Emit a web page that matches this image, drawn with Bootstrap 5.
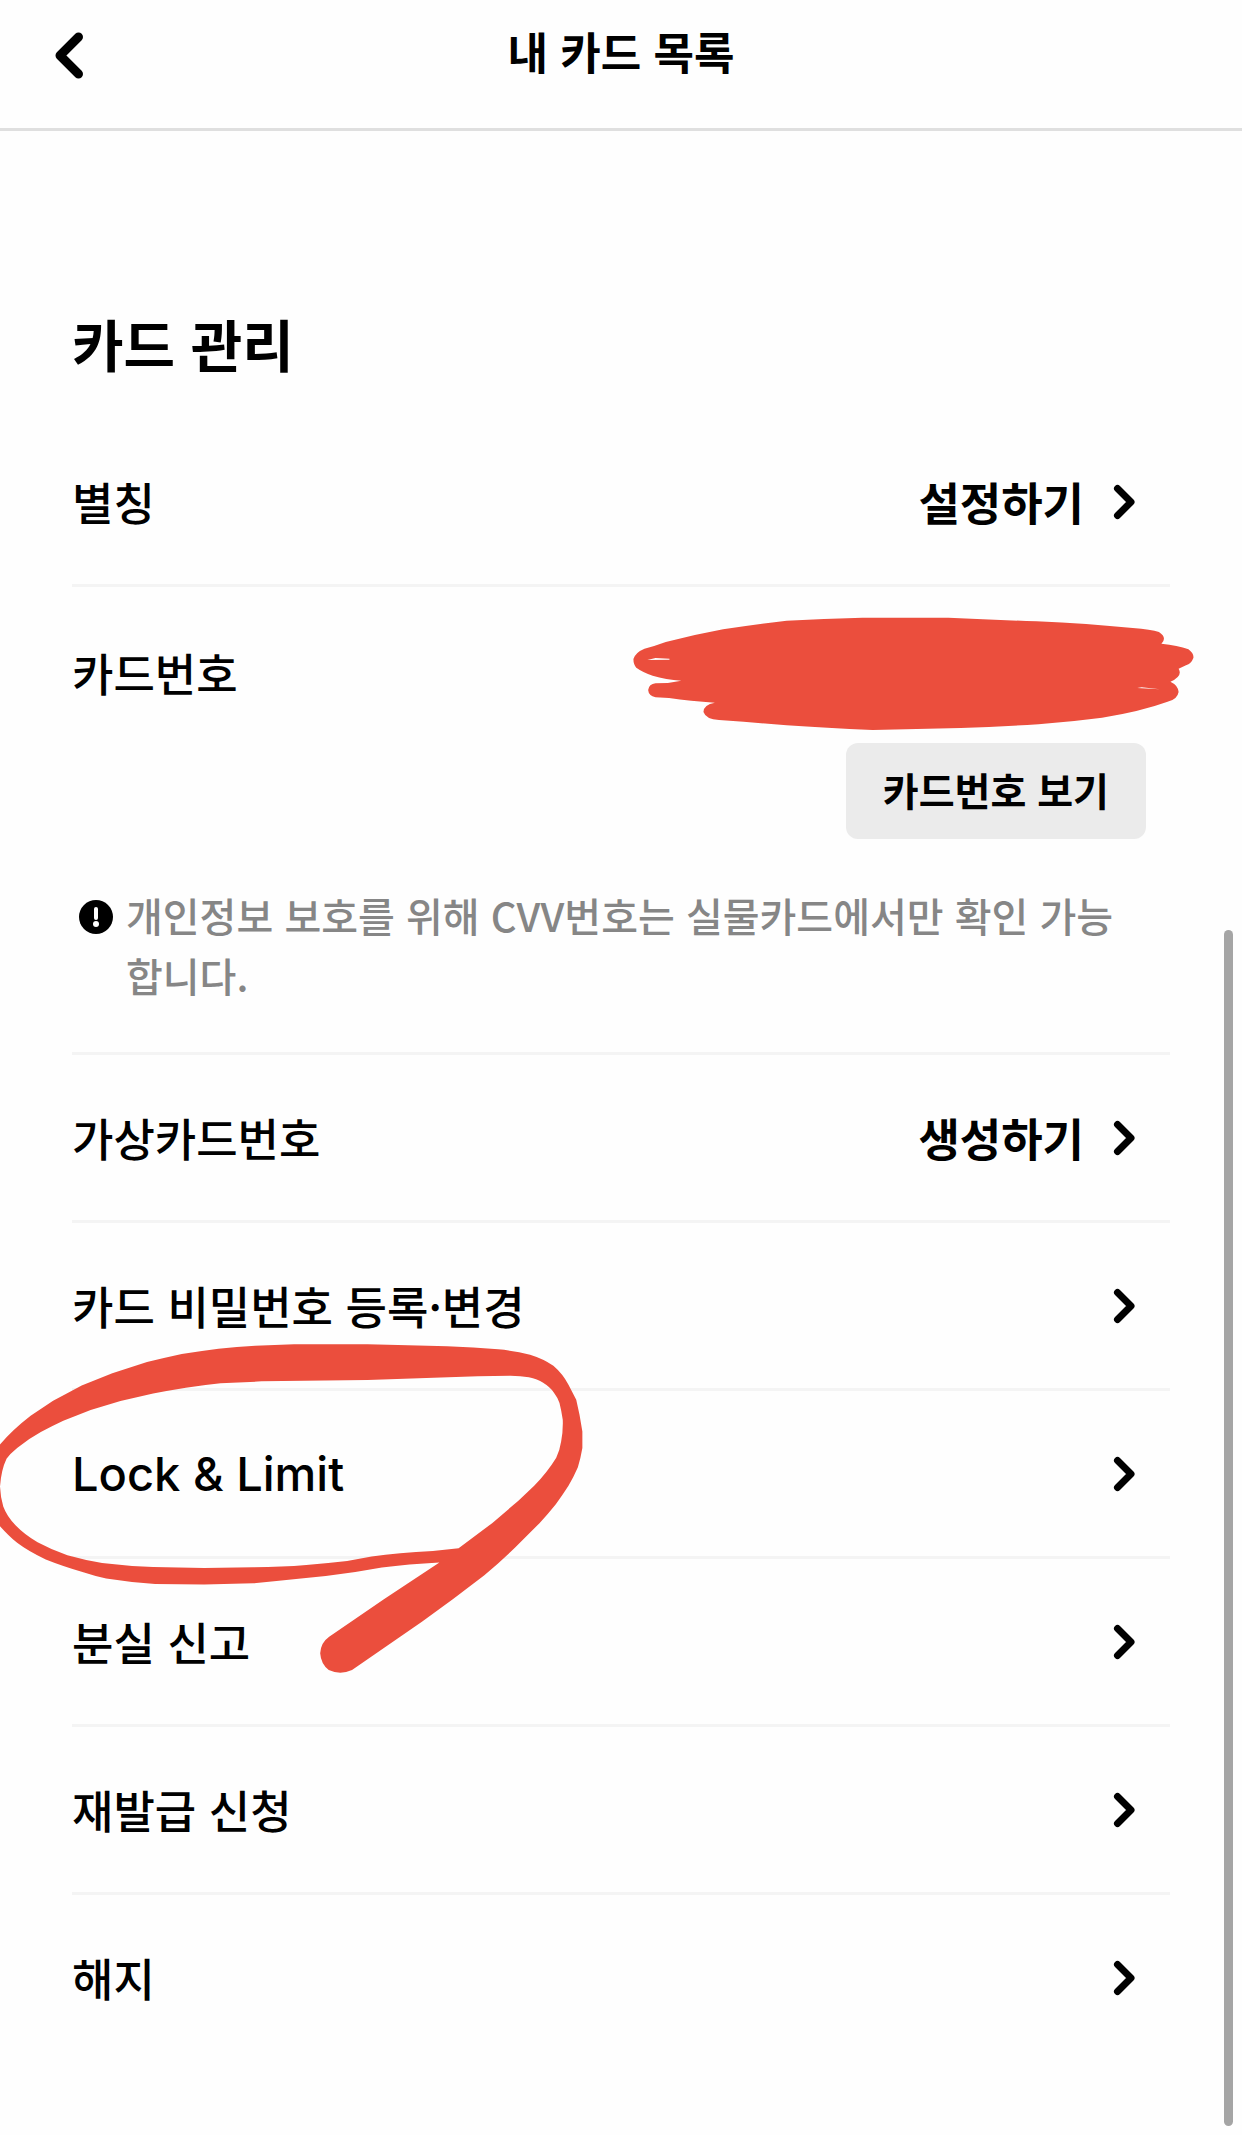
<!DOCTYPE html>
<html lang="ko">
<head>
<meta charset="utf-8">
<meta name="viewport" content="width=device-width, initial-scale=1">
<title>내 카드 목록</title>
<link href="https://cdn.jsdelivr.net/npm/bootstrap@5.3.0/dist/css/bootstrap.min.css" rel="stylesheet">
<style>
  body { font-family: "Noto Sans CJK KR", "Noto Sans", sans-serif; color: #000; background: #fefefe; font-size: 45px; line-height: 66px; font-weight: 500; overflow-x: hidden; }
  .topbar { padding: 18px 48px 44px; border-bottom: 3px solid #dfdfdf; }
  .topbar-side { width: 44px; }
  .topbar h1 { font-size: 44px; line-height: 66px; font-weight: 700; }
  .page { padding: 172px 72px 68px; }
  .page h2 { font-size: 56px; line-height: 80px; font-weight: 700; margin-bottom: 36px; }
  .menu-list { --bs-list-group-border-width: 3px; --bs-list-group-border-color: #f4f4f4; }
  .menu-item { background: none; padding: 50px 24px 49px 0; color: #000; }
  .menu-action { gap: 26px; font-weight: 700; }
  .menu-number { padding: 53px 0 47px; }
  .latin-label { font-family: Inter, "Noto Sans CJK KR", sans-serif; font-size: 47px; }
  .btn-view { background: #ebebeb; color: #000; font-size: 39px; line-height: 60px; font-weight: 700; padding: 16px 37px 20px; border: 0; border-radius: 12px; margin: 37px 24px 46px 0; }
  .note { font-size: 40px; line-height: 60px; color: #868686; gap: 13px; padding-left: 7px; margin-right: 24px; }
  .note svg { margin-top: 15px; }
  .scribble { right: -25px; top: 30px; }
  .loop { left: -72px; top: -48px; z-index: 3; pointer-events: none; }
  .thumb { width: 9px; height: 56vh; right: 9px; bottom: 9px; background: #a5a5a5; }
</style>
<script src="https://cdn.jsdelivr.net/npm/bootstrap@5.3.0/dist/js/bootstrap.bundle.min.js"></script>
</head>
<body>
<svg class="d-none" aria-hidden="true">
  <symbol id="chevron" viewBox="0 0 36 36"><path d="M7.5 4.5 21 18 7.5 31.5" fill="none" stroke="#000" stroke-width="7" stroke-linecap="round" stroke-linejoin="round"/></symbol>
</svg>

<header class="topbar d-flex align-items-center justify-content-between">
  <button type="button" class="btn p-0 border-0 topbar-side d-flex" aria-label="뒤로">
    <svg width="44" height="60" viewBox="0 0 44 60"><path d="M30.500 16 12 34.500 30.500 53" fill="none" stroke="#000" stroke-width="9" stroke-linecap="round" stroke-linejoin="round"/></svg>
  </button>
  <h1 class="m-0">내 카드 목록</h1>
  <span class="topbar-side"></span>
</header>

<main class="page">
  <h2>카드 관리</h2>
  <div class="list-group list-group-flush menu-list">
    <a href="#" class="list-group-item menu-item d-flex justify-content-between align-items-center">
      <span>별칭</span>
      <span class="menu-action d-flex align-items-center">설정하기 <svg width="36" height="36"><use href="#chevron"/></svg></span>
    </a>

    <div class="list-group-item menu-item menu-number position-relative d-flex flex-column">
      <span>카드번호</span>
      <svg class="scribble position-absolute" width="562" height="114" viewBox="80 530 1372 342" preserveAspectRatio="none" role="img" aria-label="가려진 카드번호">
        <path fill="#eb4e3d" d="M108 625Q134 617 160 605Q230 583 300 567Q380 552 455 541Q545 535 640 532H850Q955 538 1065 543Q1190 550 1300 563Q1345 568 1364 575Q1385 592 1370 610Q1410 615 1436 627Q1450 640 1448 653Q1443 670 1430 675L1412 685Q1423 708 1392 724Q1411 735 1412 755Q1409 778 1385 784Q1320 813 1225 832Q1150 844 1070 852Q970 859 880 863L665 869Q550 863 455 855L350 844L290 839Q258 837 252 815Q252 793 280 787Q220 782 168 773L135 771Q118 766 117 749Q119 731 135 729L165 728L198 721Q160 718 128 706Q104 696 88 682Q81 672 81 656Q86 636 108 625Z"/>
        <path fill="#fefefe" d="M115 659 135 653 169 655V658ZM1311 743 1322 741 1366 747Z"/>
      </svg>
      <button type="button" class="btn btn-view align-self-end">카드번호 보기</button>
      <div class="note d-flex align-items-start">
        <svg class="flex-shrink-0" width="34" height="34" viewBox="0 0 34 34" aria-hidden="true"><circle cx="17" cy="17" r="17"/><path d="M17 9v9" stroke="#fff" stroke-width="4" stroke-linecap="round"/><circle cx="17" cy="24" r="3" fill="#fff"/></svg>
        <span>개인정보 보호를 위해 CVV번호는 실물카드에서만 확인 가능<br>합니다.</span>
      </div>
    </div>

    <a href="#" class="list-group-item menu-item d-flex justify-content-between align-items-center">
      <span>가상카드번호</span>
      <span class="menu-action d-flex align-items-center">생성하기 <svg width="36" height="36"><use href="#chevron"/></svg></span>
    </a>
    <a href="#" class="list-group-item menu-item d-flex justify-content-between align-items-center">
      <span>카드 비밀번호 등록·변경</span>
      <svg width="36" height="36"><use href="#chevron"/></svg>
    </a>
    <a href="#" class="list-group-item menu-item position-relative d-flex justify-content-between align-items-center">
      <span class="latin-label">Lock &amp; Limit</span>
      <svg width="36" height="36"><use href="#chevron"/></svg>
      <svg class="loop position-absolute" width="584" height="331" viewBox="0 310 1430 992" preserveAspectRatio="none" aria-hidden="true">
        <path fill="#eb4e3d" fill-rule="evenodd" d="M-10 630Q20 580 75 528L130 483Q165 460 200 437L275 401L360 367Q400 355 445 343Q490 334 535 327Q580 321 625 318L720 314H900Q1000 317 1095 320Q1160 323 1220 329Q1260 333 1298 345Q1330 357 1355 378Q1378 402 1392 435L1411 480Q1420 525 1426 575V625Q1422 655 1415 682Q1405 710 1392 738Q1378 765 1361 793Q1342 822 1321 850L1262 922Q1225 966 1186 1006Q1110 1078 1034 1145L862 1290Q833 1306 805 1290Q786 1273 784 1240Q785 1208 806 1190L940 1078L1076 968Q1000 973 935 983L870 996Q795 1010 725 1017Q670 1024 620 1030L500 1034L380 1032Q320 1028 260 1016Q230 1008 206 998Q155 980 112 959Q70 935 42 909Q18 885 -10 845ZM0 740Q1 770 8 800Q17 830 38 856Q60 884 92 907Q127 930 165 946Q205 960 250 969Q310 978 375 981L500 984L620 982Q690 981 750 975Q800 970 850 963L910 950Q975 938 1060 933L1123 925L1205 850L1270 782L1308 738Q1340 698 1362 654Q1371 630 1374 605Q1379 575 1378 540Q1375 515 1370 490Q1365 472 1356 458Q1347 442 1330 429Q1316 418 1295 413Q1275 409 1250 408Q1210 408 1170 410L900 421L640 425L540 431Q495 437 455 444Q415 452 375 461L295 484L222 511L155 543Q125 560 100 577Q70 597 42 625Q25 642 16 657Q3 690 0 740Z"/>
      </svg>
    </a>
    <a href="#" class="list-group-item menu-item d-flex justify-content-between align-items-center">
      <span>분실 신고</span>
      <svg width="36" height="36"><use href="#chevron"/></svg>
    </a>
    <a href="#" class="list-group-item menu-item d-flex justify-content-between align-items-center">
      <span>재발급 신청</span>
      <svg width="36" height="36"><use href="#chevron"/></svg>
    </a>
    <a href="#" class="list-group-item menu-item d-flex justify-content-between align-items-center">
      <span>해지</span>
      <svg width="36" height="36"><use href="#chevron"/></svg>
    </a>
  </div>
</main>
<div class="thumb position-fixed rounded-pill" aria-hidden="true"></div>
</body>
</html>
